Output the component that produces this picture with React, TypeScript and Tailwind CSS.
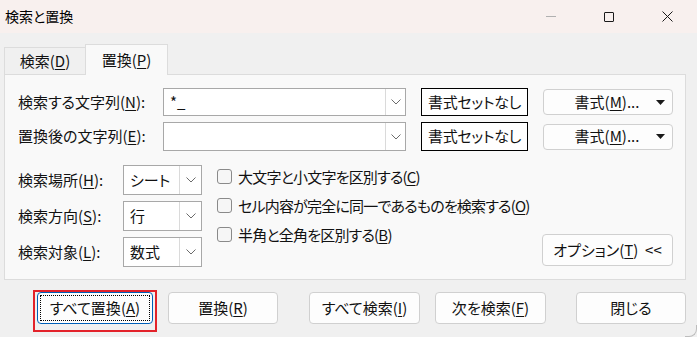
import React from 'react';

const FONT = "font-['Noto_Sans_CJK_JP','Noto_Sans',sans-serif] [font-feature-settings:'palt']";

function Key({ k }: { k: string }) {
  return (
    <>
      (<span className="underline underline-offset-2">{k}</span>)
    </>
  );
}

function Chevron() {
  return (
    <svg width="10" height="6" viewBox="0 0 10 6" fill="none">
      <path d="M0.5 0.5 L5 5 L9.5 0.5" stroke="#6b6b6b" strokeWidth="1" />
    </svg>
  );
}

function Tri() {
  return (
    <svg width="9" height="5" viewBox="0 0 9 5">
      <path d="M0 0 H9 L4.5 5 Z" fill="#1a1a1a" />
    </svg>
  );
}

function Combo({ value }: { value?: string }) {
  return (
    <div className="flex w-[79px] h-[30px] border border-[#a8a8a8] bg-white">
      <div className="flex-1 flex items-center pl-[6px] text-[15px] text-[#111]">{value}</div>
      <div className="w-[22px] flex items-center justify-center border-l border-[#dadada]">
        <Chevron />
      </div>
    </div>
  );
}

function Check({ children }: { children: React.ReactNode }) {
  return (
    <div className="flex items-center h-[15px] whitespace-nowrap">
      <div className="w-[15px] h-[15px] rounded-[3px] border border-[#8a8a8a] bg-[#f6f6f6] shrink-0" />
      <span className="ml-[6px] text-[15px] text-[#111] leading-none tracking-[-0.8px]">{children}</span>
    </div>
  );
}

function Btn({ children, w, className = '' }: { children: React.ReactNode; w: string; className?: string }) {
  return (
    <div
      className={`${w} h-[32px] shrink-0 flex items-center justify-center whitespace-nowrap rounded-[4px] border border-[#d0d0d0] bg-[#fdfdfd] text-[15px] text-[#111] ${className}`}
    >
      {children}
    </div>
  );
}

function TextRow({ label, k, value, h }: { label: string; k: string; value?: string; h: string }) {
  return (
    <div className="flex items-center">
      <div className="w-[145px] text-[15px] text-[#111] whitespace-nowrap">
        {label}
        <Key k={k} />:
      </div>
      <div className={`flex w-[243px] ${h} border border-[#a8a8a8] bg-white`}>
        <div className="flex-1 flex items-center pl-[6px] text-[15px] text-[#111]">{value}</div>
        <div className="w-[20px] flex items-center justify-center border-l border-[#dadada]">
          <Chevron />
        </div>
      </div>
      <div className={`ml-[15px] w-[107px] ${h} border border-black bg-white flex items-center justify-center text-[15px] text-[#111] whitespace-nowrap tracking-[-0.3px]`}>
        書式セットなし
      </div>
      <div className="ml-[15px] w-[130px] h-[26px] rounded-[4px] border border-[#d0d0d0] bg-[#fdfdfd] flex items-center text-[15px] text-[#111]">
        <span className="flex-1 text-center pl-[14px]">
          書式<Key k="M" />...
        </span>
        <span className="pr-[7px] flex items-center">
          <Tri />
        </span>
      </div>
    </div>
  );
}

export default function App() {
  return (
    <div className={`relative w-[697px] h-[337px] bg-[#f0f0f0] overflow-hidden ${FONT}`}>
      {/* title bar */}
      <div className="h-[33px] bg-[#f8f0ee] flex items-center">
        <span className="pl-[5px] text-[14px] text-black">検索と置換</span>
        <div className="ml-auto flex items-center h-full">
          <div className="w-[58px] flex justify-center">
            <div className="w-[10px] h-px bg-[#b0b0b0]" />
          </div>
          <div className="w-[58px] flex justify-center">
            <div className="w-[10px] h-[10px] border border-[#1a1a1a] rounded-[1px]" />
          </div>
          <div className="w-[58px] flex justify-center mr-[1px]">
            <svg width="11" height="11" viewBox="0 0 11 11">
              <path d="M0.5 0.5 L10.5 10.5 M10.5 0.5 L0.5 10.5" stroke="#1a1a1a" strokeWidth="1" />
            </svg>
          </div>
        </div>
      </div>

      {/* tabs */}
      <div className="flex items-end h-[41px] pl-[4px]">
        <div className="w-[81px] h-[27px] flex items-center justify-center text-[15px] text-[#111] border-t border-l border-[#dcdcdc] bg-[#f0f0f0]">
          検索<Key k="D" />
        </div>
        <div className="w-[83px] h-[31px] -mb-px relative z-10 flex items-center justify-center text-[15px] text-[#111] border-t border-l border-r border-[#dcdcdc] bg-[#f9f9f9]">
          置換<Key k="P" />
        </div>
      </div>

      {/* panel */}
      <div className="ml-[4px] w-[682px] h-[206px] border border-[#dcdcdc] bg-[#f9f9f9] pl-[13px] pr-[12px] pt-[13px]">
        <TextRow label="検索する文字列" k="N" value="*_" h="h-[28px]" />
        <div className="mt-[6px]">
          <TextRow label="置換後の文字列" k="E" h="h-[29px]" />
        </div>

        <div className="flex mt-[14px]">
          <div className="flex flex-col gap-[6px] shrink-0">
            {[
              ['検索場所', 'H', 'シート'],
              ['検索方向', 'S', '行'],
              ['検索対象', 'L', '数式'],
            ].map(([label, k, v]) => (
              <div key={k} className="flex items-center">
                <div className="w-[105px] text-[15px] text-[#111] whitespace-nowrap">
                  {label}
                  <Key k={k} />:
                </div>
                <Combo value={v} />
              </div>
            ))}
          </div>
          <div className="ml-[15px] pt-[4px] flex-1 w-0 flex flex-col gap-[14px]">
            <Check>
              大文字と小文字を区別する<Key k="C" />
            </Check>
            <Check>
              セル内容が完全に同一であるものを検索する<Key k="O" />
            </Check>
            <Check>
              半角と全角を区別する<Key k="B" />
            </Check>
          </div>
          <div className="self-end mb-[1px] shrink-0">
            <Btn w="w-[131px]" className="h-[31px]">
              オプション<Key k="T" />&nbsp;&nbsp;&lt;&lt;
            </Btn>
          </div>
        </div>
      </div>

      {/* bottom buttons */}
      <div className="flex mt-[12px] pl-[37px]">
        <div className="w-[116px] h-[32px] rounded-[4px] border border-[#005fb8] bg-[#fdfdfd] p-[2px]">
          <div className="w-full h-full border border-dotted border-black flex items-center justify-center text-[15px] text-[#111]">
            すべて置換<Key k="A" />
          </div>
        </div>
        <Btn w="w-[110px]" className="ml-[15px]">
          置換<Key k="R" />
        </Btn>
        <Btn w="w-[111px]" className="ml-[31px]">
          すべて検索<Key k="I" />
        </Btn>
        <Btn w="w-[111px]" className="ml-[15px]">
          次を検索<Key k="F" />
        </Btn>
        <Btn w="w-[110px]" className="ml-[30px]">
          閉じる
        </Btn>
      </div>

      {/* annotation frame */}
      <div className="absolute left-[33px] top-[290px] w-[124px] h-[42px] border-2 border-[#e3222a]" />

      {/* window edge */}
      <div className="absolute right-0 bottom-0 w-[12px] h-[12px] rounded-br-[8px] border-r border-b border-[#bdbdbd]" />
    </div>
  );
}
